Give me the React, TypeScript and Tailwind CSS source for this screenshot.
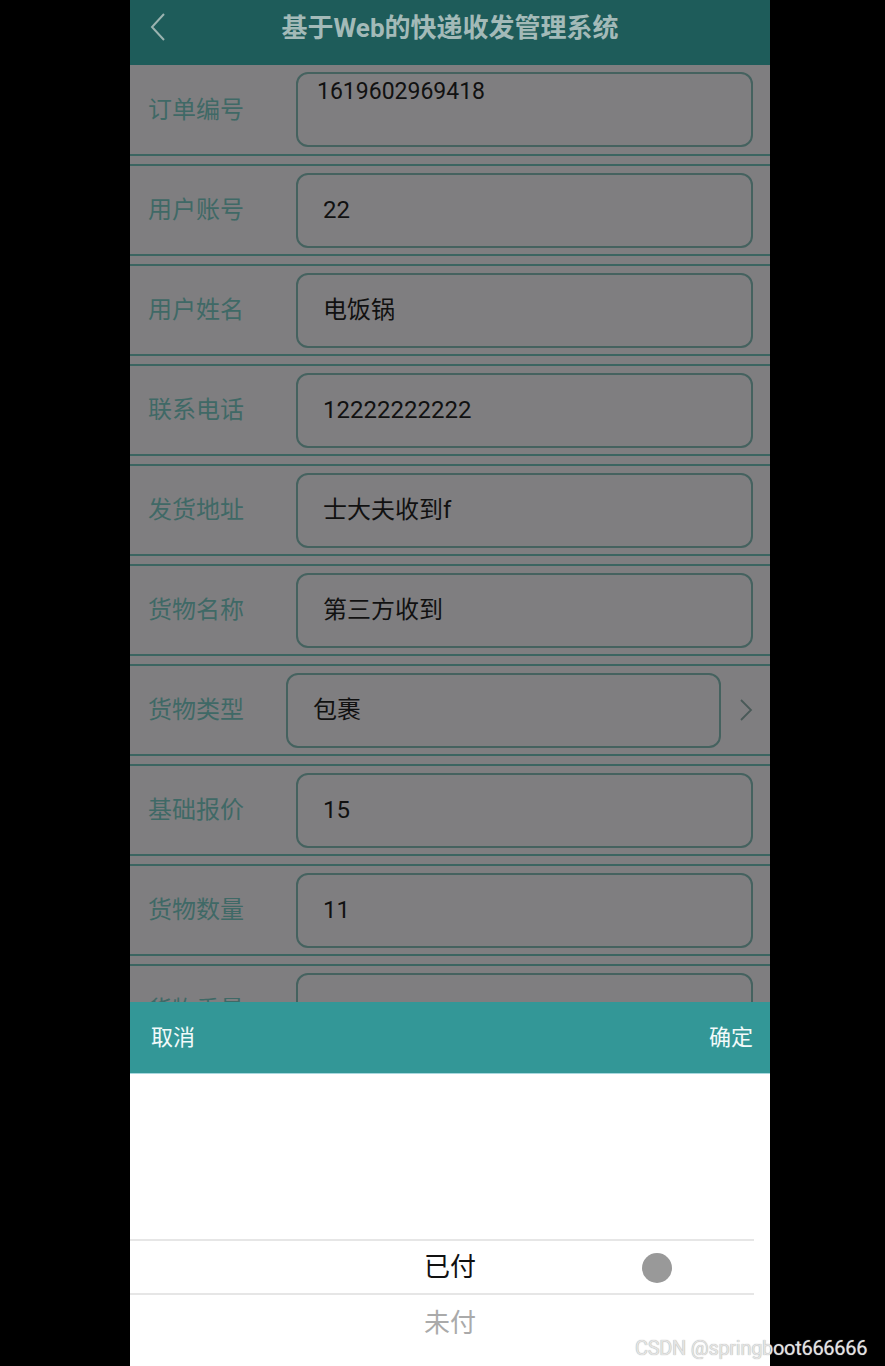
import React from 'react';

type Field = { label: string; value: string; multi?: boolean; select?: boolean };

const fields: Field[] = [
  { label: '订单编号', value: '1619602969418', multi: true },
  { label: '用户账号', value: '22' },
  { label: '用户姓名', value: '电饭锅' },
  { label: '联系电话', value: '12222222222' },
  { label: '发货地址', value: '士大夫收到f' },
  { label: '货物名称', value: '第三方收到' },
  { label: '货物类型', value: '包裹', select: true },
  { label: '基础报价', value: '15' },
  { label: '货物数量', value: '11' },
  { label: '货物重量', value: '' },
];

const font = { fontFamily: 'Roboto, "Noto Sans CJK SC", sans-serif' };

function FormRow({ field, first }: { field: Field; first: boolean }) {
  return (
    <div
      className={`flex items-center shrink-0 border-b-2 border-[#3c6561] ${
        first ? 'h-[91px]' : 'mt-[8px] h-[92px] border-t-2'
      }`}
    >
      <div className="w-[166px] pl-[18px] text-[24px] text-[#3f6966]">{field.label}</div>
      {field.select ? (
        <div className="flex flex-1 items-center">
          <div className="-ml-[10px] flex h-[75px] flex-1 items-center rounded-[12px] border-2 border-[#45625f] pl-[25px] text-[24px] text-[#111]">
            {field.value}
          </div>
          <svg width="14" height="24" viewBox="0 0 14 24" className="ml-[18px] mr-[17px]">
            <polyline points="2,2 12,12 2,22" fill="none" stroke="#4a5a58" strokeWidth="1.8" />
          </svg>
        </div>
      ) : (
        <div
          className={`mr-[17px] flex h-[75px] flex-1 rounded-[12px] border-2 border-[#45625f] text-[#111] ${
            field.multi ? 'items-start pl-[19px] pt-[1px] text-[23px]' : 'items-center pl-[25px] text-[24px]'
          }`}
        >
          {field.value}
        </div>
      )}
    </div>
  );
}

export default function App() {
  return (
    <div className="h-[1366px] w-[885px] overflow-hidden bg-black" style={font}>
      <div className="relative ml-[130px] flex h-[1366px] w-[640px] flex-col overflow-hidden bg-[#7f7e80]">
        {/* header */}
        <div className="relative flex h-[65px] shrink-0 items-center justify-center bg-[#1e5c5a] pb-[8px]">
          <svg width="20" height="30" viewBox="0 0 20 30" className="absolute left-[18px] top-[12px]">
            <polyline points="16,2 4,15 16,28" fill="none" stroke="#9bb3b0" strokeWidth="2" />
          </svg>
          <span className="text-[26px] font-bold text-[#a3bab8]">基于Web的快递收发管理系统</span>
        </div>

        {fields.map((f, i) => (
          <FormRow key={f.label} field={f} first={i === 0} />
        ))}

        {/* picker sheet */}
        <div className="absolute bottom-0 left-0 right-0 top-[1002px] flex flex-col bg-white">
          <div className="flex h-[71px] items-center justify-between bg-[#339797] px-[21px] pr-[17px] text-[22px] text-[#f2fafa]">
            <span>取消</span>
            <span>确定</span>
          </div>
          <div className="h-[1px] bg-[#a8d8de]" />
          <div className="h-[165px]" />
          <div className="relative mr-[16px] flex h-[56px] items-center justify-center border-y-2 border-[#e6e6e6] pl-[16px] text-[26px] text-[#111]">
            已付
            <div className="absolute left-[512px] top-[12px] h-[30px] w-[30px] rounded-full bg-[#999999]" />
          </div>
          <div className="flex h-[56px] items-center justify-center text-[26px] text-[#aaaaaa]">未付</div>
        </div>
      </div>
      <div
        className="absolute left-[635px] top-[1333px] text-[20px] tracking-[-0.3px] text-[#e4e4e4]"
        style={{ textShadow: '0 0 1px #999' }}
      >
        CSDN @springboot666666
      </div>
    </div>
  );
}
